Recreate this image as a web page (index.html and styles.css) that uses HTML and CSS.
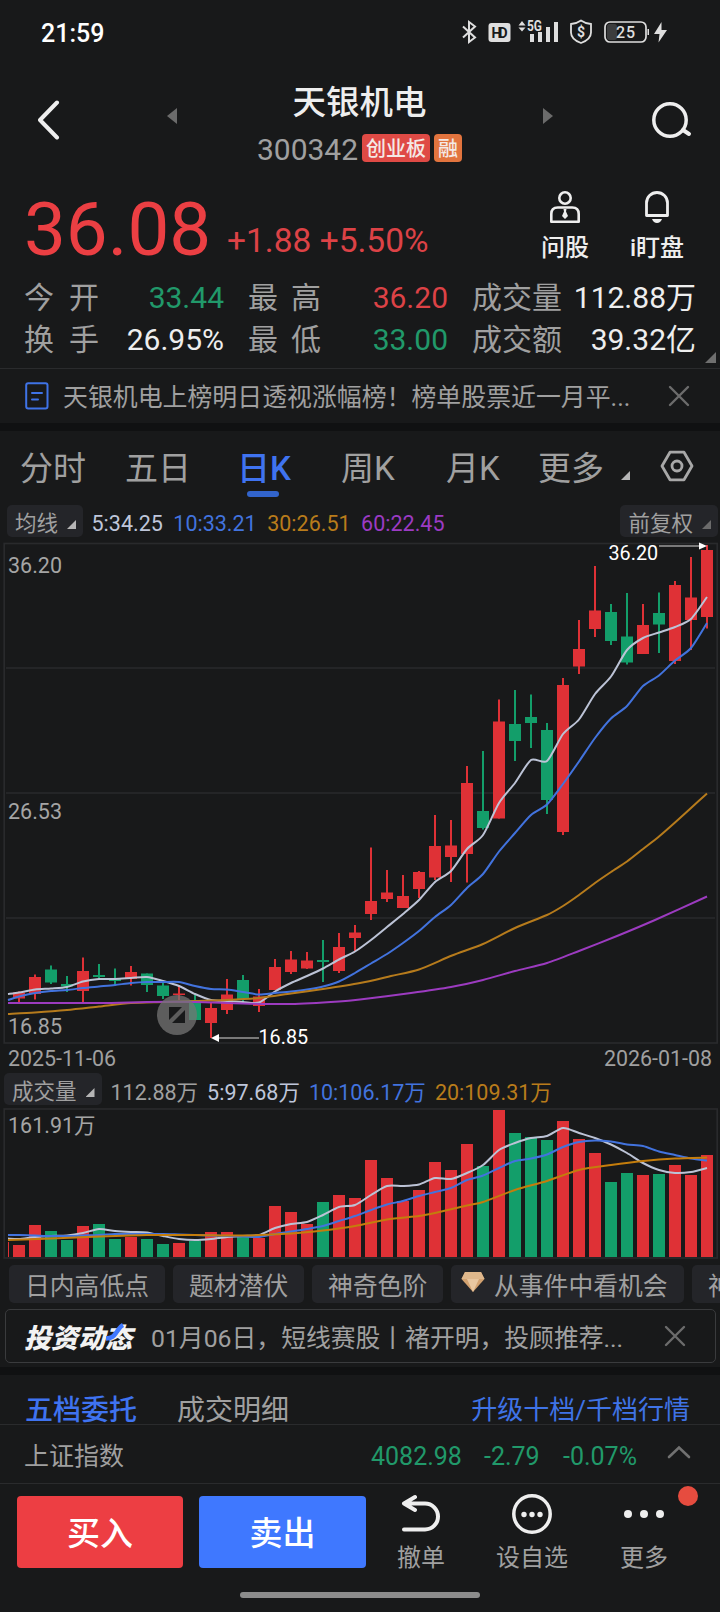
FILE: index.html
```html
<!DOCTYPE html>
<html lang="zh-CN">
  <head>
    <meta charset="UTF-8" />
    <meta name="viewport" content="width=device-width, initial-scale=1.0" />
    <title>天银机电 300342</title>
    <link rel="stylesheet" href="styles.css">
  </head>
  <body>
    <div class="status">
      <span class="time">21:59</span>
      <svg class="status-icons" width="212" height="30" viewBox="0 0 212 30">
        <g fill="none" stroke="#dedede" stroke-width="2">
          <path d="M4 10.500 16 21.500 10 26V6L16 10.500 4 21.500" />
          <path d="M122 4.500c3.500 2.500 6.500 3.300 10 3.500v8.500c0 5-4.500 8.500-10 10.500-5.500-2-10-5.500-10-10.500V8c3.500-.2 6.500-1 10-3.500z" stroke-width="1.800" />
          <rect x="146" y="6" width="41" height="20" rx="5" stroke-width="1.700" />
        </g>
        <rect x="29.500" y="7" width="22" height="19" rx="3" fill="#dedede" />
        <rect x="148" y="8" width="10" height="16" rx="2.500" fill="#3c3d3e" />
        <g fill="#dedede">
          <path d="M59.500 9.500 63 5l3.500 4.500zM59.500 11.500H66.500L63 15.500z" />
          <rect x="71" y="18" width="4" height="8" />
          <rect x="79" y="16" width="4" height="10" />
          <rect x="87" y="11" width="4" height="15" />
          <rect x="95" y="6" width="4" height="20" />
          <path d="M188.500 13h1.500v6h-1.500zM202.500 6 195 18h5.500l-1 8.500L208 14h-5.500z" />
        </g>
        <text x="32.500" y="22" class="st-hd" textLength="16">HD</text>
        <text x="68" y="15" class="st-5g" textLength="15" lengthAdjust="spacingAndGlyphs">5G</text>
        <text x="122" y="21" class="st-safe">$</text>
        <text x="167" y="22" class="st-bat">25</text>
      </svg>
    </div>

    <header class="header">
      <svg class="back" width="22" height="40" viewBox="0 0 22 40">
        <path d="M19 2.500 2 20l17 17.500" fill="none" stroke="#eee" stroke-width="4" stroke-linecap="round" stroke-linejoin="round" />
      </svg>
      <i class="arrow prev"></i>
      <div class="title">
        <h1>天银机电</h1>
        <div class="code">
          <span>300342</span>
          <b class="tag tag-red">创业板</b>
          <b class="tag tag-orange">融</b>
        </div>
      </div>
      <i class="arrow next"></i>
      <svg class="search" width="42" height="38" viewBox="0 0 42 38">
        <circle cx="19" cy="19" r="16.200" fill="none" stroke="#eee" stroke-width="3.500" />
        <path d="m32 29 6 4" stroke="#eee" stroke-width="4" stroke-linecap="round" />
      </svg>
    </header>

    <section class="quote">
      <div class="price-row">
        <span class="price">36.08</span>
        <span class="change">+1.88 +5.50%</span>
        <div class="tool tool-ask">
          <svg width="32" height="34" viewBox="0 0 32 34">
            <g fill="none" stroke="#eee" stroke-width="2.600">
              <circle cx="16" cy="8" r="5.700" />
              <path d="M2.300 31.700V24q0-6.500 6.500-6.500h14.400q6.500 0 6.500 6.500v7.700z" stroke-linejoin="round" />
            </g>
            <path d="M14.500 19h3l-.5 2.500 2 4.500-3 3-3-3 2-4.500z" fill="#eee" />
          </svg>
          <span>问股</span>
        </div>
        <div class="tool tool-watch">
          <svg width="32" height="34" viewBox="0 0 32 34">
            <path d="M5.500 25.500V13a10.500 10.500 0 0 1 21 0v12.500z" fill="none" stroke="#eee" stroke-width="2.800" stroke-linejoin="round" />
            <path d="M11 29h10q-1.500 4-5 4t-5-4z" fill="#eee" />
          </svg>
          <span>i盯盘</span>
        </div>
      </div>
      <div class="stats">
        <span class="label"><i>今</i><i>开</i></span><span class="val green">33.44</span>
        <span class="label"><i>最</i><i>高</i></span><span class="val red">36.20</span>
        <span class="label">成交量</span><span class="val">112.88万</span>
        <span class="label"><i>换</i><i>手</i></span><span class="val">26.95%</span>
        <span class="label"><i>最</i><i>低</i></span><span class="val green">33.00</span>
        <span class="label">成交额</span><span class="val">39.32亿</span>
      </div>
      <i class="corner quote-corner"></i>
    </section>

    <div class="notice">
      <svg width="24" height="28" viewBox="0 0 24 28" fill="none" stroke="#3f73e6" stroke-width="2">
        <rect x="1.200" y="1.200" width="21.300" height="25.300" rx="2" />
        <path d="M7 11h10M7 17.500h6" stroke-linecap="round" />
      </svg>
      <p>天银机电上榜明日透视涨幅榜！榜单股票近一月平...</p>
      <svg class="close" width="22" height="22" viewBox="0 0 22 22"><path d="m2 2 18 18M20 2 2 20" /></svg>
    </div>
    <div class="band"></div>

    <nav class="tabs">
      <a>分时</a>
      <a>五日</a>
      <a class="on">日K</a>
      <a>周K</a>
      <a>月K</a>
      <a>更多<i class="corner"></i></a>
      <svg width="34" height="32" viewBox="0 0 34 32" fill="none" stroke="#a8a8a8" stroke-width="2.800">
        <path d="M10 2.200h14L32 16l-8 13.800H10L2 16z" stroke-linejoin="round" />
        <circle cx="17" cy="16" r="5" />
      </svg>
    </nav>

    <div class="legend">
      <span class="pill">均线<i class="corner"></i></span>
      <span class="num c-ma5">5:34.25</span>
      <span class="num c-blue">10:33.21</span>
      <span class="num c-orange">30:26.51</span>
      <span class="num c-purple">60:22.45</span>
      <span class="pill pill-right">前复权<i class="corner dim"></i></span>
    </div>

    <svg class="kline" id="kline" width="720" height="507" viewBox="0 540 720 507"></svg>

    <div class="dates">
      <span>2025-11-06</span>
      <span>2026-01-08</span>
    </div>

    <div class="legend legend-vol">
      <span class="pill">成交量<i class="corner"></i></span>
      <span class="num">112.88万</span>
      <span class="num c-ma5">5:97.68万</span>
      <span class="num c-blue">10:106.17万</span>
      <span class="num c-orange">20:109.31万</span>
    </div>

    <svg class="volume" id="volume" width="720" height="155" viewBox="0 1106 720 155"></svg>

    <div class="chips">
      <span class="chip">日内高低点</span>
      <span class="chip">题材潜伏</span>
      <span class="chip">神奇色阶</span>
      <span class="chip chip-gem">
        <svg width="24" height="22" viewBox="0 0 24 22">
          <path d="M4 1h16l3.500 7L12 21 .5 8z" fill="#d3a270" />
          <path d="M4 1h16l3.500 7H.5z" fill="#dfb88c" />
          <path d="M6 8h12l-6 13z" fill="#e9c7a0" />
        </svg>从事件中看机会</span>
      <span class="chip">神</span>
    </div>

    <div class="news">
      <span class="news-logo">投资动态
        <svg width="22" height="18" viewBox="0 0 22 18"><path d="M1 15.500c7 0 8-3 11-7 1.500-2 3-5 6-6.500" fill="none" stroke="#3f78ff" stroke-width="4.500" /></svg>
      </span>
      <p>01月06日，短线赛股丨褚开明，投顾推荐...</p>
      <svg class="close" width="22" height="22" viewBox="0 0 22 22"><path d="m2 2 18 18M20 2 2 20" /></svg>
    </div>
    <div class="band"></div>

    <div class="orders">
      <a class="on">五档委托</a>
      <a>成交明细</a>
      <a class="upgrade">升级十档/千档行情</a>
    </div>

    <div class="index-row">
      <span class="index-name">上证指数</span>
      <span class="i1">4082.98</span>
      <span class="i2">-2.79</span>
      <span class="i3">-0.07%</span>
      <svg width="24" height="14" viewBox="0 0 24 14"><path d="M2 12 12 2.500 22 12" fill="none" stroke="#717171" stroke-width="2.600" stroke-linecap="round" /></svg>
    </div>

    <footer class="actions">
      <button class="buy">买入</button>
      <button class="sell">卖出</button>
      <div class="act act-undo">
        <svg width="40" height="42" viewBox="0 0 40 42" fill="none" stroke="#eee" stroke-width="4" stroke-linecap="round" stroke-linejoin="round">
          <path d="M14 4 3 10.500l11 6.500M3 10.500h21a13 13 0 0 1 0 26H3" />
        </svg>
        <span>撤单</span>
      </div>
      <div class="act act-fav">
        <svg width="40" height="42" viewBox="0 0 40 42" fill="#eee">
          <circle cx="20" cy="21" r="18.200" fill="none" stroke="#eee" stroke-width="3.500" />
          <circle cx="12" cy="21.500" r="2.700" /><circle cx="20" cy="21.500" r="2.700" /><circle cx="28" cy="21.500" r="2.700" />
        </svg>
        <span>设自选</span>
      </div>
      <div class="act act-more">
        <svg width="40" height="42" viewBox="0 0 40 42" fill="#eee">
          <circle cx="4" cy="21" r="4" /><circle cx="20" cy="21" r="4" /><circle cx="36" cy="21" r="4" />
        </svg>
        <span>更多</span>
        <i class="dot"></i>
      </div>
    </footer>
    <div class="home"></div>

    <script>
      const RED = '#df3136';
      const GREEN = '#139e6a';
      const STEP = 16;
      const X0 = 19;

      // high, body top, body bottom, low, 1 = up
      const candles = [
        [991.5, 992.5, 998.5, 1002, 1], [974.5, 977, 994, 999.5, 1], [965.5, 969.5, 982.500, 984, 0],
        [976, 984, 986.5, 992, 0], [957.5, 971, 991, 1002, 1], [964, 975, 977, 980, 0],
        [968.5, 979, 981, 986, 0], [966, 972, 979, 985.5, 1], [973.5, 973.5, 985, 992, 0],
        [983, 985.5, 996, 999, 0], [985, 993.5, 995, 1000, 1], [995, 1000, 1020, 1020, 0],
        [1003, 1008, 1023, 1038, 1], [979, 994.5, 1010, 1014, 1], [975, 980, 999, 1002, 0],
        [989, 996.5, 1006, 1012, 1], [959, 967, 990, 990, 1], [951, 959.5, 972, 974, 1],
        [952, 960.5, 968.5, 969, 1], [940, 960, 962, 982, 0], [933, 947, 971, 973, 1],
        [925, 932.5, 938, 952, 1], [847.5, 901, 914, 920, 1], [870, 892.5, 899, 902, 1],
        [875, 896, 908, 908, 1], [871, 872, 889, 898, 1], [815, 846, 877.5, 880, 1],
        [820, 845.5, 857, 882, 1], [766, 783, 854, 882.5, 1], [751, 811, 828, 829.5, 0],
        [699.5, 721.500, 818.5, 818.5, 1], [690, 724, 741, 761, 0], [694.5, 717, 723, 748, 0],
        [723, 730, 800, 814, 0], [678, 685, 832, 835, 1], [620, 649, 666.5, 674, 1],
        [566, 610.5, 629, 637, 1], [604, 612, 641, 645, 0], [593, 636.5, 662.5, 664.5, 0],
        [604, 625, 654, 654, 1], [592.5, 613, 624.5, 653, 0], [581, 585, 661, 664, 1],
        [557, 597.5, 620, 650, 1], [545, 550, 617, 628.5, 1]
      ];
      const volumes = [
        1245, 1225, 1231, 1240, 1226, 1224, 1239, 1237, 1239, 1244, 1243, 1241, 1232, 1232, 1236.5,
        1238, 1206, 1212, 1224, 1202, 1195, 1198, 1160, 1178, 1201, 1190, 1162, 1170, 1144, 1166,
        1110, 1133, 1137, 1140, 1121, 1139, 1153, 1182, 1173, 1175, 1174, 1165, 1175, 1155
      ];

      const ma5 = [992.5, 989.5, 988.5, 987, 981.5, 979, 979, 978, 977, 981, 986, 994, 1000, 1001, 1002,
        1002.5, 991.5, 983, 976, 968.5, 959.5, 951.5, 940, 927, 914, 900, 882, 871, 849, 835, 803, 783,
        760, 761, 734, 719.5, 694, 676.5, 650, 638, 632.5, 627, 619, 597];
      const ma10 = [996.5, 993, 991, 990, 988, 986.5, 985, 983, 982, 982, 982, 986, 989, 989.5, 992,
        994.5, 993, 991.5, 989.5, 986.5, 981.5, 973, 963.5, 954, 943, 931, 917, 905, 888, 874, 851.5, 833,
        815, 804.5, 784, 761.5, 738, 718.5, 706, 686, 675.5, 660.5, 648, 623];
      const ma30 = [[8, 1014], [35, 1012.5], [67, 1010], [99, 1006.5], [131, 1003], [163, 1002], [195, 1001],
        [227, 1000], [259, 998], [291, 993.5], [323, 989], [360, 983], [391, 976], [419, 969.5], [452, 955.5],
        [483, 944], [515, 928], [547, 915], [563, 906], [579, 895], [595, 883], [611, 872], [627, 861.5],
        [643, 849], [659, 836.5], [675, 822.5], [691, 808], [707, 793.5]];
      const ma60 = [[8, 1003], [99, 1003], [147, 1002], [195, 1002], [243, 1003.5], [291, 1004], [339, 1001.5],
        [360, 999.5], [411, 993], [451, 987], [483, 980], [515, 971], [547, 963], [579, 951], [617, 936],
        [655, 920], [707, 896.5]];
      const vma5 = [1239, 1237, 1236, 1235.5, 1233, 1229, 1231, 1232, 1232.5, 1236, 1239, 1240, 1239, 1237,
        1236, 1235, 1228, 1224, 1222, 1215, 1207, 1205, 1195, 1186, 1186, 1184.5, 1178, 1179, 1173, 1165,
        1150, 1143, 1138, 1136, 1128, 1133, 1138, 1144.5, 1153, 1163, 1170, 1173, 1172, 1168];
      const vma10 = [1235, 1235.5, 1236, 1236, 1235.5, 1235, 1234, 1234, 1234, 1234, 1234.5, 1235, 1235.5,
        1236, 1236.5, 1237, 1234, 1231.5, 1229, 1226, 1221, 1216, 1210, 1204.5, 1201, 1196, 1192, 1188,
        1180, 1175.5, 1168, 1161, 1158.5, 1154.5, 1147, 1142, 1140.5, 1141.5, 1144.5, 1146, 1151.5, 1155,
        1158.5, 1160.5];
      const vma20 = [[8, 1240], [51, 1238.5], [99, 1236.5], [147, 1235], [195, 1235], [243, 1235.5],
        [291, 1233.5], [323, 1230.5], [355, 1226], [387, 1219.5], [419, 1216], [435, 1213], [467, 1205.5],
        [483, 1202], [515, 1190], [547, 1181], [579, 1170], [611, 1165], [643, 1161], [675, 1158.5], [707, 1157.5]];

      function withX(values, first) {
        return [[8, first]].concat(values.map((v, i) => [X0 + i * STEP, v]));
      }

      // smoothed line through the points
      function curve(pts, color) {
        let d = 'M' + pts[0];
        for (let i = 0; i < pts.length - 1; i++) {
          const a = pts[i - 1] || pts[i];
          const b = pts[i];
          const c = pts[i + 1];
          const e = pts[i + 2] || c;
          d += 'C' + [b[0] + (c[0] - a[0]) / 8, b[1] + (c[1] - a[1]) / 8,
            c[0] - (e[0] - b[0]) / 8, c[1] - (e[1] - b[1]) / 8, c[0], c[1]];
        }
        return `<path d="${d}" fill="none" stroke="${color}" stroke-width="2"/>`;
      }

      function box(x, y, w, h, color) {
        return `<rect x="${x}" y="${y}" width="${w}" height="${h}" fill="${color}"/>`;
      }

      function drawKline() {
        let s = '<g fill="none" stroke="#292a2c" stroke-width="1.700">' +
          '<rect x="4.2" y="543.500" width="713" height="499.500"/>' +
          '<path d="M6 668h709M6 793h709M6 918h709"/></g>';
        candles.forEach((c, i) => {
          const x = X0 + i * STEP;
          const color = c[4] ? RED : GREEN;
          s += box(x - 1, c[0], 2, c[3] - c[0], color) + box(x - 6, c[1], 12, c[2] - c[1], color);
        });
        s += curve(withX(ma5, 994), '#bcc3d6') + curve(withX(ma10, 1000), '#4273de') +
          curve(ma30, '#b67b1c') + curve(ma60, '#9c3bc0');
        s += '<text class="axis" x="8" y="573">36.20</text>' +
          '<text class="axis" x="8" y="819">26.53</text>' +
          '<text class="axis" x="8" y="1034">16.85</text>';
        // high / low markers
        s += '<path d="M659 546h42M259 1038h-41" stroke="#999" stroke-width="1.700"/>' +
          '<path d="M699 542.500v7l8-3.500zM219 1034v8l-8-4z" fill="#fff"/>' +
          '<text class="mark" x="608.500" y="560">36.20</text>' +
          '<text class="mark" x="258.500" y="1044">16.85</text>';
        // fullscreen button
        s += '<circle cx="177" cy="1015" r="20" fill="#747474" fill-opacity=".75"/>' +
          '<path d="M169 1007h13l-13 13zM185 1010v13h-13z" fill="#18191a"/>';
        document.getElementById('kline').innerHTML = s;
      }

      function drawVolume() {
        let s = '<rect x="4.2" y="1109" width="713" height="149" fill="none" stroke="#292a2c" stroke-width="1.700"/>';
        s += box(8, 1242, 1, 15, RED);
        volumes.forEach((v, i) => {
          s += box(X0 + i * STEP - 6, v, 12, 1257 - v, candles[i][4] ? RED : GREEN);
        });
        s += curve(withX(vma5, 1238.5), '#bcc3d6') + curve(withX(vma10, 1235), '#4273de') + curve(vma20, '#c47d0c');
        s += '<text class="axis" x="8" y="1133">161.91万</text>';
        document.getElementById('volume').innerHTML = s;
      }

      drawKline();
      drawVolume();
    </script>
  </body>
</html>
```
FILE: styles.css
```css
* {
  box-sizing: border-box;
}
body {
  margin: 0;
  width: 720px;
  height: 1612px;
  overflow: hidden;
  background: #18191a;
  color: #a0a0a0;
  font-family: Roboto, "Noto Sans CJK SC", sans-serif;
  font-size: 21.5px;
}
i {
  font-style: normal;
}
svg {
  display: block;
  flex: none;
}
p {
  margin: 0;
  white-space: nowrap;
}
.c-ma5 {
  color: #bfc6da;
}
.c-blue {
  color: #4273de;
}
.c-orange {
  color: #b97c1b;
}
.c-purple {
  color: #9c3bc4;
}

/* status bar */
.status {
  display: flex;
  justify-content: space-between;
  align-items: center;
  height: 64px;
  padding: 1px 49px 0 41px;
}
.time {
  padding-top: 1px;
  color: #fff;
  font-size: 25px;
  font-weight: 500;
}
.status-icons {
  margin-top: -3px;
}
.status-icons text {
  font-family: Roboto, sans-serif;
  font-weight: 700;
  fill: #dedede;
}
.status-icons .st-hd {
  font-size: 14px;
  fill: #18191a;
}
.status-icons .st-5g {
  font-size: 14px;
}
.status-icons .st-safe {
  font-size: 14px;
  text-anchor: middle;
}
.status-icons .st-bat {
  font-size: 16px;
  font-weight: 500;
  letter-spacing: 1px;
  text-anchor: middle;
}

/* header */
.header {
  display: flex;
  align-items: flex-start;
  height: 112px;
  padding: 0 27px 0 38px;
}
.back {
  margin-top: 36px;
}
.search {
  margin: 37px 0 0 auto;
}
.arrow {
  width: 10px;
  height: 16px;
  margin-top: 44px;
  background: #6b6b6b;
}
.prev {
  margin-left: 107px;
  clip-path: polygon(100% 0, 100% 100%, 0 50%);
}
.next {
  clip-path: polygon(0 0, 100% 50%, 0 100%);
}
.title {
  width: 366px;
  text-align: center;
}
.title h1 {
  margin: 16px 0 -1px -1px;
  color: #eee;
  font-size: 33.5px;
  font-weight: 500;
  line-height: 46px;
}
.code {
  display: flex;
  justify-content: center;
  align-items: center;
  gap: 4px;
  height: 48px;
  margin-left: -1px;
  font-size: 30px;
}
.tag {
  height: 28px;
  margin-top: -2px;
  padding: 0 4px;
  border-radius: 4px;
  color: #f4e9e6;
  font-size: 20px;
  font-weight: 500;
  line-height: 30px;
}
.tag-red {
  background: #df4a45;
}
.tag-orange {
  background: #e2743e;
}

/* quote */
.quote {
  position: relative;
  height: 193px;
  border-bottom: 1px solid #2a2b2d;
}
.price-row {
  display: flex;
  height: 101px;
  padding-left: 24px;
}
.price {
  width: 203px;
  color: #eb3f43;
  font-size: 74.5px;
  line-height: 108px;
}
.change {
  width: 308px;
  color: #dc4246;
  font-size: 33.5px;
  line-height: 129px;
}
.tool {
  display: flex;
  flex-direction: column;
  align-items: center;
  width: 60px;
  margin-top: 14px;
  color: #eee;
  font-size: 24px;
  font-weight: 500;
}
.tool span {
  margin-top: 6px;
  line-height: 36px;
  white-space: nowrap;
}
.tool-watch {
  margin-left: 32px;
}
.stats {
  display: grid;
  grid-template-columns: 75px 125px 97px 127px 113px 135px;
  grid-auto-rows: 42px;
  padding-left: 24px;
  font-size: 30px;
  line-height: 42px;
}
.label {
  display: flex;
  justify-content: space-between;
  white-space: nowrap;
}
.label:nth-child(6n + 3),
.label:nth-child(6n + 5) {
  padding-left: 24px;
}
.val {
  color: #eee;
  text-align: right;
  white-space: nowrap;
}
.red {
  color: #dc4246;
}
.green {
  color: #21996a;
}
.corner {
  display: inline-block;
  width: 9px;
  height: 9px;
  background: #b5b5b5;
  clip-path: polygon(100% 0, 100% 100%, 0 100%);
}
.quote-corner {
  position: absolute;
  right: 4px;
  bottom: 5px;
  width: 11px;
  height: 11px;
  background: #6f6f6f;
}

/* notice */
.notice {
  display: flex;
  align-items: center;
  height: 54px;
  padding: 0 30px 0 25px;
  font-size: 24.9px;
}
.notice p {
  margin: -2px 0 0 14px;
}
.close {
  margin-left: auto;
  fill: none;
  stroke: #6c6c6c;
  stroke-width: 2.4;
  stroke-linecap: round;
}
.band {
  height: 8px;
  background: #101112;
}

/* period tabs */
.tabs {
  display: grid;
  grid-template-columns: 105px 104px 110px 103px 96px 122px 34px;
  align-items: start;
  height: 74px;
  padding-left: 20px;
  font-size: 33px;
  line-height: 75px;
}
.tabs a {
  white-space: nowrap;
}
.tabs .on {
  position: relative;
  padding-left: 8px;
  color: #3f73f0;
  font-weight: 500;
}
.tabs .on::after {
  content: "";
  position: absolute;
  left: 18px;
  top: 60px;
  width: 32px;
  height: 6px;
  border-radius: 3px;
  background: #3264cc;
}
.tabs a:nth-child(4) {
  padding-left: 2px;
}
.tabs a:nth-child(5) {
  padding-left: 4px;
}
.tabs .corner {
  margin-left: 17px;
}
.tabs svg {
  margin-top: 19px;
}

/* indicator rows */
.legend {
  display: flex;
  align-items: center;
  gap: 10.5px;
  height: 32px;
  padding: 0 2px 0 7px;
  white-space: nowrap;
}
.num {
  padding-top: 5px;
}
.pill {
  display: flex;
  align-items: center;
  gap: 9px;
  height: 32px;
  margin-right: -2px;
  padding: 1px 7px 0 8px;
  border-radius: 5px;
  background: #242529;
}
.pill .corner {
  margin-top: 6px;
}
.pill .dim {
  background: #6b6b6b;
}
.pill-right {
  margin: 0 0 0 auto;
}
.legend-vol {
  gap: 9px;
  padding-left: 4px;
}
.legend-vol .pill {
  margin-right: 0;
}
.legend-vol .num {
  padding-top: 3px;
}

/* charts */
.kline {
  margin-top: 3px;
  overflow: visible;
}
.volume {
  margin-top: 1px;
}
.axis {
  fill: #a5a5a5;
  font-size: 21.5px;
}
.mark {
  fill: #fff;
  font-size: 19.8px;
}
.dates {
  display: flex;
  justify-content: space-between;
  height: 26px;
  padding: 0 8px;
  font-size: 21.4px;
  line-height: 24px;
}

/* chips */
.chips {
  display: flex;
  gap: 8px;
  height: 48px;
  padding: 4px 0 6px 9px;
  overflow: hidden;
  font-size: 24.8px;
}
.chip {
  display: flex;
  flex: none;
  align-items: center;
  width: 131px;
  height: 38px;
  padding: 0 16px;
  border-radius: 5px;
  background: #242529;
  white-space: nowrap;
}
.chip:first-child {
  width: 156px;
}
.chip-gem {
  width: 233px;
  padding: 0 10px;
}
.chip-gem svg {
  margin: -4px 9px 0 0;
}

/* news */
.news {
  display: flex;
  align-items: center;
  width: 711px;
  height: 54px;
  margin: 0 0 4px 5px;
  padding: 0 29px 0 18px;
  border: 1px solid #3a3b3d;
  border-radius: 5px;
  font-size: 24.8px;
}
.news-logo {
  position: relative;
  width: 127px;
  color: #f2f2f2;
  font-size: 27px;
  font-style: italic;
  font-weight: 900;
  white-space: nowrap;
}
.news-logo svg {
  position: absolute;
  left: 81px;
  top: 6px;
}

/* orders */
.orders {
  display: flex;
  height: 50px;
  padding: 0 30px 0 25px;
  border-bottom: 1px solid #2a2b2d;
  font-size: 28px;
  line-height: 71px;
}
.orders .on {
  margin-right: 40px;
  color: #3f73f0;
  font-weight: 500;
}
.orders .upgrade {
  margin-left: auto;
  color: #3f73e6;
  font-size: 26px;
}
.index-row {
  display: flex;
  align-items: center;
  height: 59px;
  padding: 0 29px 0 24px;
  border-bottom: 1px solid #2a2b2d;
  color: #21996a;
  font-size: 25px;
}
.index-name {
  width: 347px;
  color: #a0a0a0;
}
.i1 {
  width: 113px;
}
.i2 {
  width: 79px;
}
.i1,
.i2,
.i3 {
  padding-top: 4px;
}
.index-row svg {
  margin: -5px 0 0 auto;
}

/* bottom actions */
.actions {
  display: flex;
  height: 108px;
  padding: 12px 0 0 17px;
}
.actions button {
  width: 166px;
  height: 72px;
  margin-right: 16px;
  padding: 4px 0 0;
  border: 0;
  border-radius: 4px;
  color: #fff;
  font: 500 33px/68px Roboto, "Noto Sans CJK SC", sans-serif;
}
.buy {
  background: #ed3e43;
}
.actions .sell {
  width: 167px;
  background: #3f78ff;
}
.act {
  position: relative;
  display: flex;
  flex-direction: column;
  align-items: center;
  width: 80px;
  margin-top: -3px;
  font-size: 24px;
}
.act-undo {
  margin-left: -1px;
}
.act span {
  margin-top: 5px;
  line-height: 36px;
  white-space: nowrap;
}
.act-fav {
  margin-left: 31px;
}
.act-more {
  margin-left: 32px;
}
.dot {
  position: absolute;
  left: 74px;
  top: -7px;
  width: 20px;
  height: 20px;
  border-radius: 50%;
  background: #e64c3f;
}
.home {
  width: 240px;
  height: 6px;
  margin: 0 auto;
  border-radius: 3px;
  background: #8c8c8c;
}
```
